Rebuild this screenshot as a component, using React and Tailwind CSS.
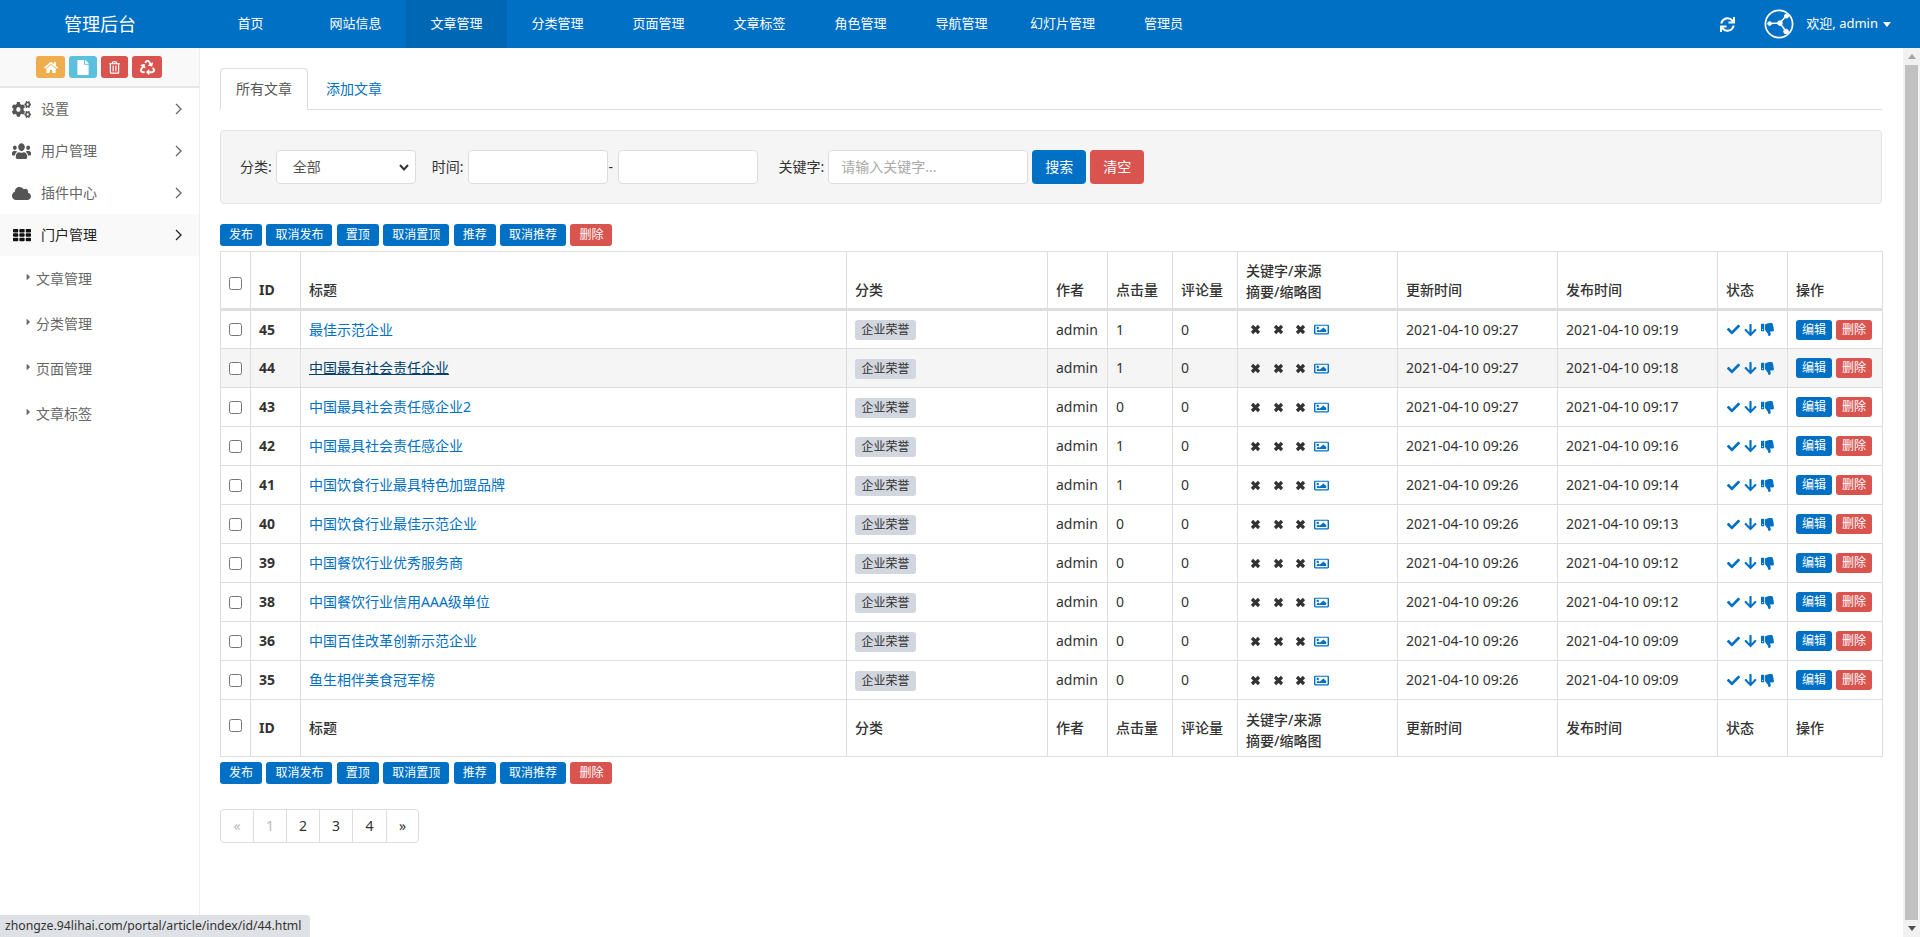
import React from "react";
import {
  FaHome, FaFile, FaRegTrashAlt, FaRecycle, FaCogs, FaUsers, FaCloud, FaTh,
  FaSync, FaCaretRight, FaRegImage, FaCheck, FaArrowDown, FaThumbsDown,
} from "react-icons/fa";

const font = "font-['Noto_Sans','Noto_Sans_CJK_SC',sans-serif]";

const navItems = ["首页", "网站信息", "文章管理", "分类管理", "页面管理", "文章标签", "角色管理", "导航管理", "幻灯片管理", "管理员"];
const batchActions = ["发布", "取消发布", "置顶", "取消置顶", "推荐", "取消推荐"];
const headLabels = ["标题", "分类", "作者", "点击量", "评论量"];

const rows = [
  { id: 45, title: "最佳示范企业", hits: 1, update: "2021-04-10 09:27", publish: "2021-04-10 09:19" },
  { id: 44, title: "中国最有社会责任企业", hits: 1, update: "2021-04-10 09:27", publish: "2021-04-10 09:18", hover: true },
  { id: 43, title: "中国最具社会责任感企业2", hits: 0, update: "2021-04-10 09:27", publish: "2021-04-10 09:17" },
  { id: 42, title: "中国最具社会责任感企业", hits: 1, update: "2021-04-10 09:26", publish: "2021-04-10 09:16" },
  { id: 41, title: "中国饮食行业最具特色加盟品牌", hits: 1, update: "2021-04-10 09:26", publish: "2021-04-10 09:14" },
  { id: 40, title: "中国饮食行业最佳示范企业", hits: 0, update: "2021-04-10 09:26", publish: "2021-04-10 09:13" },
  { id: 39, title: "中国餐饮行业优秀服务商", hits: 0, update: "2021-04-10 09:26", publish: "2021-04-10 09:12" },
  { id: 38, title: "中国餐饮行业信用AAA级单位", hits: 0, update: "2021-04-10 09:26", publish: "2021-04-10 09:12" },
  { id: 36, title: "中国百佳改革创新示范企业", hits: 0, update: "2021-04-10 09:26", publish: "2021-04-10 09:09" },
  { id: 35, title: "鱼生相伴美食冠军榜", hits: 0, update: "2021-04-10 09:26", publish: "2021-04-10 09:09" },
];

const cell = "border border-[#ddd] px-2";

const Checkbox = () => (
  <span className="block w-[13px] h-[13px] bg-white border border-[#767676] rounded-[2.5px]"></span>
);

const Cross = () => (
  <svg width="11" height="11" viewBox="0 0 11 11" fill="none" stroke="#333" strokeWidth="3.2">
    <path d="M2 2 L9 9 M9 2 L2 9" />
  </svg>
);

const BatchBar = () => (
  <div className="flex gap-[4.4px]">
    {batchActions.map((label) => (
      <button key={label} className="h-[22px] px-[9px] bg-[#0070c4] text-white text-xs rounded-[3px]">{label}</button>
    ))}
    <button className="h-[22px] px-[9px] bg-[#d9534f] text-white text-xs rounded-[3px]">删除</button>
  </div>
);

const HeadRow = ({ bottom }) => {
  const th = `${cell} font-medium ${bottom ? "align-middle" : "align-bottom pb-[8px]"}`;
  return (
    <tr className={`${bottom ? "h-[57px]" : "h-[58px]"} text-sm text-[#333] text-left`}>
      <th className={`${cell} align-middle`}><div className={bottom ? "mb-[6px]" : "mt-[6px]"}><Checkbox /></div></th>
      <th className={`${th} !font-bold`}>ID</th>
      {headLabels.map((label) => <th key={label} className={th}>{label}</th>)}
      <th className={`${th} leading-[21px] ${bottom ? "pt-[4px]" : "!pb-[6px]"}`}>关键字/来源<br />摘要/缩略图</th>
      <th className={th}>更新时间</th>
      <th className={th}>发布时间</th>
      <th className={th}>状态</th>
      <th className={th}>操作</th>
    </tr>
  );
};

const Row = ({ row }) => (
  <tr className={`h-[39px] text-sm text-[#333] ${row.hover ? "bg-[#f5f5f5]" : "bg-white"}`}>
    <td className={cell}><Checkbox /></td>
    <td className={`${cell} font-bold`}>{row.id}</td>
    <td className={cell}>
      <a className={row.hover ? "text-[#00406f] underline" : "text-[#0070c4]"}>{row.title}</a>
    </td>
    <td className={cell}>
      <span className="inline-block align-middle h-[20px] leading-[20px] px-[6.5px] text-xs text-[#333] bg-[#d2d6de] rounded-[3px]">企业荣誉</span>
    </td>
    <td className={cell}>admin</td>
    <td className={cell}>{row.hits}</td>
    <td className={cell}>0</td>
    <td className={cell}>
      <div className="flex items-center gap-[11.5px] pl-[4px]">
        <Cross />
        <Cross />
        <Cross />
        <FaRegImage preserveAspectRatio="none" className="w-[15px] h-[13px] text-[#0070c4] ml-[-3.5px]" />
      </div>
    </td>
    <td className={cell}>{row.update}</td>
    <td className={cell}>{row.publish}</td>
    <td className={cell}>
      <div className="flex items-center gap-[4px] pl-[1px] text-[#0070c4]">
        <FaCheck className="w-[13px] h-[13px]" />
        <FaArrowDown className="w-[13px] h-[14px]" />
        <FaThumbsDown className="w-[13px] h-[13px]" />
      </div>
    </td>
    <td className={cell}>
      <div className="flex gap-[4px]">
        <button className="h-[20px] px-[6px] text-xs text-white bg-[#0070c4] rounded-[3px]">编辑</button>
        <button className="h-[20px] px-[6px] text-xs text-white bg-[#d9534f] rounded-[3px]">删除</button>
      </div>
    </td>
  </tr>
);

const SideItem = ({ icon, label, active }) => (
  <div className={`h-[42px] flex items-center pl-[12px] pr-[17px] text-sm ${active ? "bg-[#f9f9f9] text-[#222]" : "text-[#666]"}`}>
    <span className={`w-[19px] flex justify-center ${active ? "text-[#111]" : "text-[#555]"}`}>{icon}</span>
    <span className="ml-[10px] flex-1">{label}</span>
    <svg width="7" height="12" viewBox="0 0 7 12" fill="none" stroke={active ? "#222" : "#666"} strokeWidth="1.3">
      <path d="M1 1 L6 6 L1 11" />
    </svg>
  </div>
);

const SubItem = ({ label }) => (
  <div className="h-[45px] flex items-center pl-[25px] text-sm text-[#666]">
    <FaCaretRight className="w-[7px] h-[10px] text-[#666] mt-[-3px]" />
    <span className="ml-[4px]">{label}</span>
  </div>
);

export default function App() {
  return (
    <div className={`relative h-[937px] overflow-hidden flex flex-col bg-white ${font}`}>
      <header className="h-[48px] flex-none flex items-center bg-[#0070c4] text-white">
        <div className="w-[200px] text-center text-lg">管理后台</div>
        <nav className="flex h-full">
          {navItems.map((item) => (
            <a
              key={item}
              className={`h-full w-[101px] flex-none flex items-center justify-center text-[13px] ${item === "首页" ? "mr-[4px]" : ""} ${item === "文章管理" ? "bg-[#0067b4]" : ""}`}
            >
              {item}
            </a>
          ))}
        </nav>
        <div className="ml-auto flex items-center pr-[29px]">
          <FaSync className="w-[15px] h-[15px]" />
          <svg className="ml-[29px]" width="30" height="30" viewBox="0 0 32 32" fill="none" stroke="white">
            <circle cx="16" cy="16" r="14.5" strokeWidth="1.8" />
            <path d="M6 15.5 L17 15 L24 7 M17 15 L23.5 24" strokeWidth="1.6" />
            <circle cx="6" cy="15.5" r="2" fill="white" />
            <circle cx="17" cy="15" r="2.5" fill="white" />
            <circle cx="24" cy="7.5" r="2.2" fill="white" />
            <circle cx="23.5" cy="24" r="2.5" fill="white" />
          </svg>
          <span className="ml-[12px] text-[13px]">欢迎, admin</span>
          <span className="ml-[5px] border-x-[4px] border-x-transparent border-t-[5px] border-t-white"></span>
        </div>
      </header>

      <div className="flex-1 flex min-h-0">
        <aside className="w-[200px] flex-none border-r border-[#eee] bg-white">
          <div className="h-[40px] flex justify-center items-start pt-[8px] gap-[4px] bg-[#f9f9f9] border-b-2 border-[#e6e6e6] pr-[1px]">
            <span className="w-[29px] h-[22px] flex items-center justify-center rounded-[3px] bg-[#f0ad4e] text-white"><FaHome className="w-[14px] h-[13px]" /></span>
            <span className="w-[28px] h-[22px] flex items-center justify-center rounded-[3px] bg-[#5bc0de] text-white"><FaFile className="w-[12px] h-[15px]" /></span>
            <span className="w-[27px] h-[22px] flex items-center justify-center rounded-[3px] bg-[#d9534f] text-white"><FaRegTrashAlt className="w-[11px] h-[13px]" /></span>
            <span className="w-[30px] h-[22px] flex items-center justify-center rounded-[3px] bg-[#d9534f] text-white"><FaRecycle className="w-[15px] h-[15px]" /></span>
          </div>
          <SideItem icon={<FaCogs preserveAspectRatio="none" className="w-[20px] h-[17px]" />} label="设置" />
          <SideItem icon={<FaUsers preserveAspectRatio="none" className="w-[19px] h-[18px]" />} label="用户管理" />
          <SideItem icon={<FaCloud preserveAspectRatio="none" className="w-[19px] h-[15px]" />} label="插件中心" />
          <SideItem icon={<FaTh preserveAspectRatio="none" className="w-[18px] h-[14px]" />} label="门户管理" active />
          <SubItem label="文章管理" />
          <SubItem label="分类管理" />
          <SubItem label="页面管理" />
          <SubItem label="文章标签" />
        </aside>

        <main className="flex-1 min-w-0 pl-[20px] pr-[21px] pt-[20px]">
          <div className="h-[42px] flex border-b border-[#ddd] text-sm">
            <div className="h-[42px] w-[88px] flex items-center justify-center bg-white border border-[#ddd] border-b-white rounded-t-[4px] text-[#555]">所有文章</div>
            <div className="h-[41px] pl-[18px] flex items-center text-[#0070c4]">添加文章</div>
          </div>

          <div className="mt-[20px] h-[74px] flex items-center pl-[19px] bg-[#f5f5f5] border border-[#e3e3e3] rounded-[4px] text-sm text-[#333]">
            <span>分类:</span>
            <div className="ml-[4px] w-[140px] h-[34px] flex items-center justify-between pl-[16px] pr-[5px] bg-white border border-[#ddd] rounded-[4px] text-[#555]">
              <span>全部</span>
              <svg width="12" height="12" viewBox="0 0 12 12" fill="none" stroke="#333" strokeWidth="2"><path d="M2 4 L6 8.5 L10 4" /></svg>
            </div>
            <span className="ml-[16px]">时间:</span>
            <div className="ml-[4px] w-[140px] h-[34px] bg-white border border-[#ddd] rounded-[4px]"></div>
            <span className="ml-[1px] w-[9px]">-</span>
            <div className="w-[140px] h-[34px] bg-white border border-[#ddd] rounded-[4px]"></div>
            <span className="ml-[21px]">关键字:</span>
            <div className="ml-[4px] w-[200px] h-[34px] flex items-center pl-[12px] bg-white border border-[#ddd] rounded-[4px] text-[#aaa]">请输入关键字...</div>
            <button className="ml-[4px] w-[54px] h-[34px] bg-[#0070c4] text-white rounded-[4px]">搜索</button>
            <button className="ml-[4px] w-[54px] h-[34px] bg-[#d9534f] text-white rounded-[4px]">清空</button>
          </div>

          <div className="mt-[20px]"><BatchBar /></div>

          <table className="mt-[5px] w-[1662px] table-fixed border-collapse border border-[#ddd]">
            <colgroup>
              <col className="w-[30px]" />
              <col className="w-[50px]" />
              <col className="w-[546px]" />
              <col className="w-[201px]" />
              <col className="w-[60px]" />
              <col className="w-[65px]" />
              <col className="w-[65px]" />
              <col className="w-[160px]" />
              <col className="w-[160px]" />
              <col className="w-[160px]" />
              <col className="w-[70px]" />
              <col className="w-[95px]" />
            </colgroup>
            <thead className="border-b-[3px] border-[#ddd]"><HeadRow /></thead>
            <tbody>{rows.map((row) => <Row key={row.id} row={row} />)}</tbody>
            <tfoot><HeadRow bottom /></tfoot>
          </table>

          <div className="mt-[5px]"><BatchBar /></div>

          <div className="mt-[25px] inline-flex h-[34px] border border-[#ddd] rounded-[4px] text-sm">
            <span className="w-[33px] flex items-center justify-center border-r border-[#ddd] text-[#bbb]">«</span>
            <span className="w-[33px] flex items-center justify-center border-r border-[#ddd] text-[#bbb]">1</span>
            <span className="w-[33px] flex items-center justify-center border-r border-[#ddd] text-[#333]">2</span>
            <span className="w-[33px] flex items-center justify-center border-r border-[#ddd] text-[#333]">3</span>
            <span className="w-[34px] flex items-center justify-center border-r border-[#ddd] text-[#333]">4</span>
            <span className="w-[31px] flex items-center justify-center text-[#333]">»</span>
          </div>
        </main>

        <div className="w-[17px] flex-none flex flex-col bg-[#f1f1f1]">
          <div className="h-[17px] flex items-center justify-center">
            <span className="border-x-[4px] border-x-transparent border-b-[5px] border-b-[#a3a3a3]"></span>
          </div>
          <div className="flex-1 mx-[2px] bg-[#c1c1c1]"></div>
          <div className="h-[17px] flex items-center justify-center">
            <span className="border-x-[4px] border-x-transparent border-t-[5px] border-t-[#505050]"></span>
          </div>
        </div>
      </div>

      <div className="absolute left-0 bottom-0 h-[22px] w-[310px] flex items-center pl-[5px] bg-[#dee1e6] rounded-tr-[4px] text-[12.25px] text-[#333]">
        zhongze.94lihai.com/portal/article/index/id/44.html
      </div>
    </div>
  );
}
